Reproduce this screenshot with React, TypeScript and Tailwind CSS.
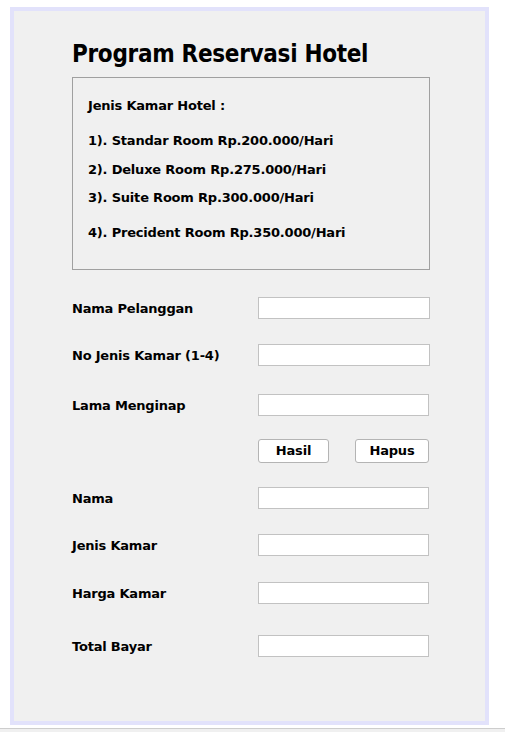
import React from "react";

const font = { fontFamily: '"DejaVu Sans", Verdana, sans-serif' };

function Field({ label, mt, w = 172 }: { label: string; mt: string; w?: number }) {
  return (
    <div className={`flex items-start h-[22px] ${mt}`}>
      <div className="w-[186px] mt-[4px] text-[13px] font-bold text-black leading-[16px] tracking-[-0.2px]">{label}</div>
      <div
        className={`h-[22px] bg-white border border-[#c2c2c2] ${w === 172 ? "w-[172px]" : "w-[171px]"}`}
      />
    </div>
  );
}

export default function App() {
  return (
    <div className="w-[505px] h-[732px] bg-white overflow-hidden" style={font}>
      <div className="pt-[7px] pl-[10px]">
        <div className="w-[479px] h-[718px] border-4 border-[#e2e2fb] bg-[#f0f0f0] pl-[58px]">
          <div className="mt-[29px] text-[24px] leading-[28px] font-bold text-black font-['DejaVu_Sans_Condensed','DejaVu_Sans',sans-serif] tracking-[-0.3px]">
            Program Reservasi Hotel
          </div>
          <div className="mt-[9px] w-[358px] h-[193px] border border-[#a0a0a0] pl-[15px] pt-[20px] text-[13px] font-bold leading-[16px] text-black tracking-[-0.2px]">
            <div>Jenis Kamar Hotel :</div>
            <div className="mt-[19px]">1). Standar Room Rp.200.000/Hari</div>
            <div className="mt-[13px]">2). Deluxe Room Rp.275.000/Hari</div>
            <div className="mt-[12px]">3). Suite Room Rp.300.000/Hari</div>
            <div className="mt-[19px]">4). Precident Room Rp.350.000/Hari</div>
          </div>
          <Field label="Nama Pelanggan" mt="mt-[27px]" />
          <Field label="No Jenis Kamar (1-4)" mt="mt-[25px]" />
          <Field label="Lama Menginap" mt="mt-[28px]" w={171} />
          <div className="flex mt-[23px] pl-[186px] h-[24px]">
            <button className="w-[71px] h-[24px] bg-white border border-[#b4b4b4] rounded-[3px] text-[13px] font-bold leading-[16px] text-black tracking-[-0.2px]">
              Hasil
            </button>
            <button className="ml-[26px] w-[74px] h-[24px] bg-white border border-[#b4b4b4] rounded-[3px] text-[13px] font-bold leading-[16px] text-black tracking-[-0.2px]">
              Hapus
            </button>
          </div>
          <Field label="Nama" mt="mt-[24px]" w={171} />
          <Field label="Jenis Kamar" mt="mt-[25px]" w={171} />
          <Field label="Harga Kamar" mt="mt-[26px]" w={171} />
          <Field label="Total Bayar" mt="mt-[31px]" w={171} />
        </div>
      </div>
      <div className="mt-[3px] border-t border-[#cdcdcd] h-[4px] bg-[#f0f0f0]" />
    </div>
  );
}
